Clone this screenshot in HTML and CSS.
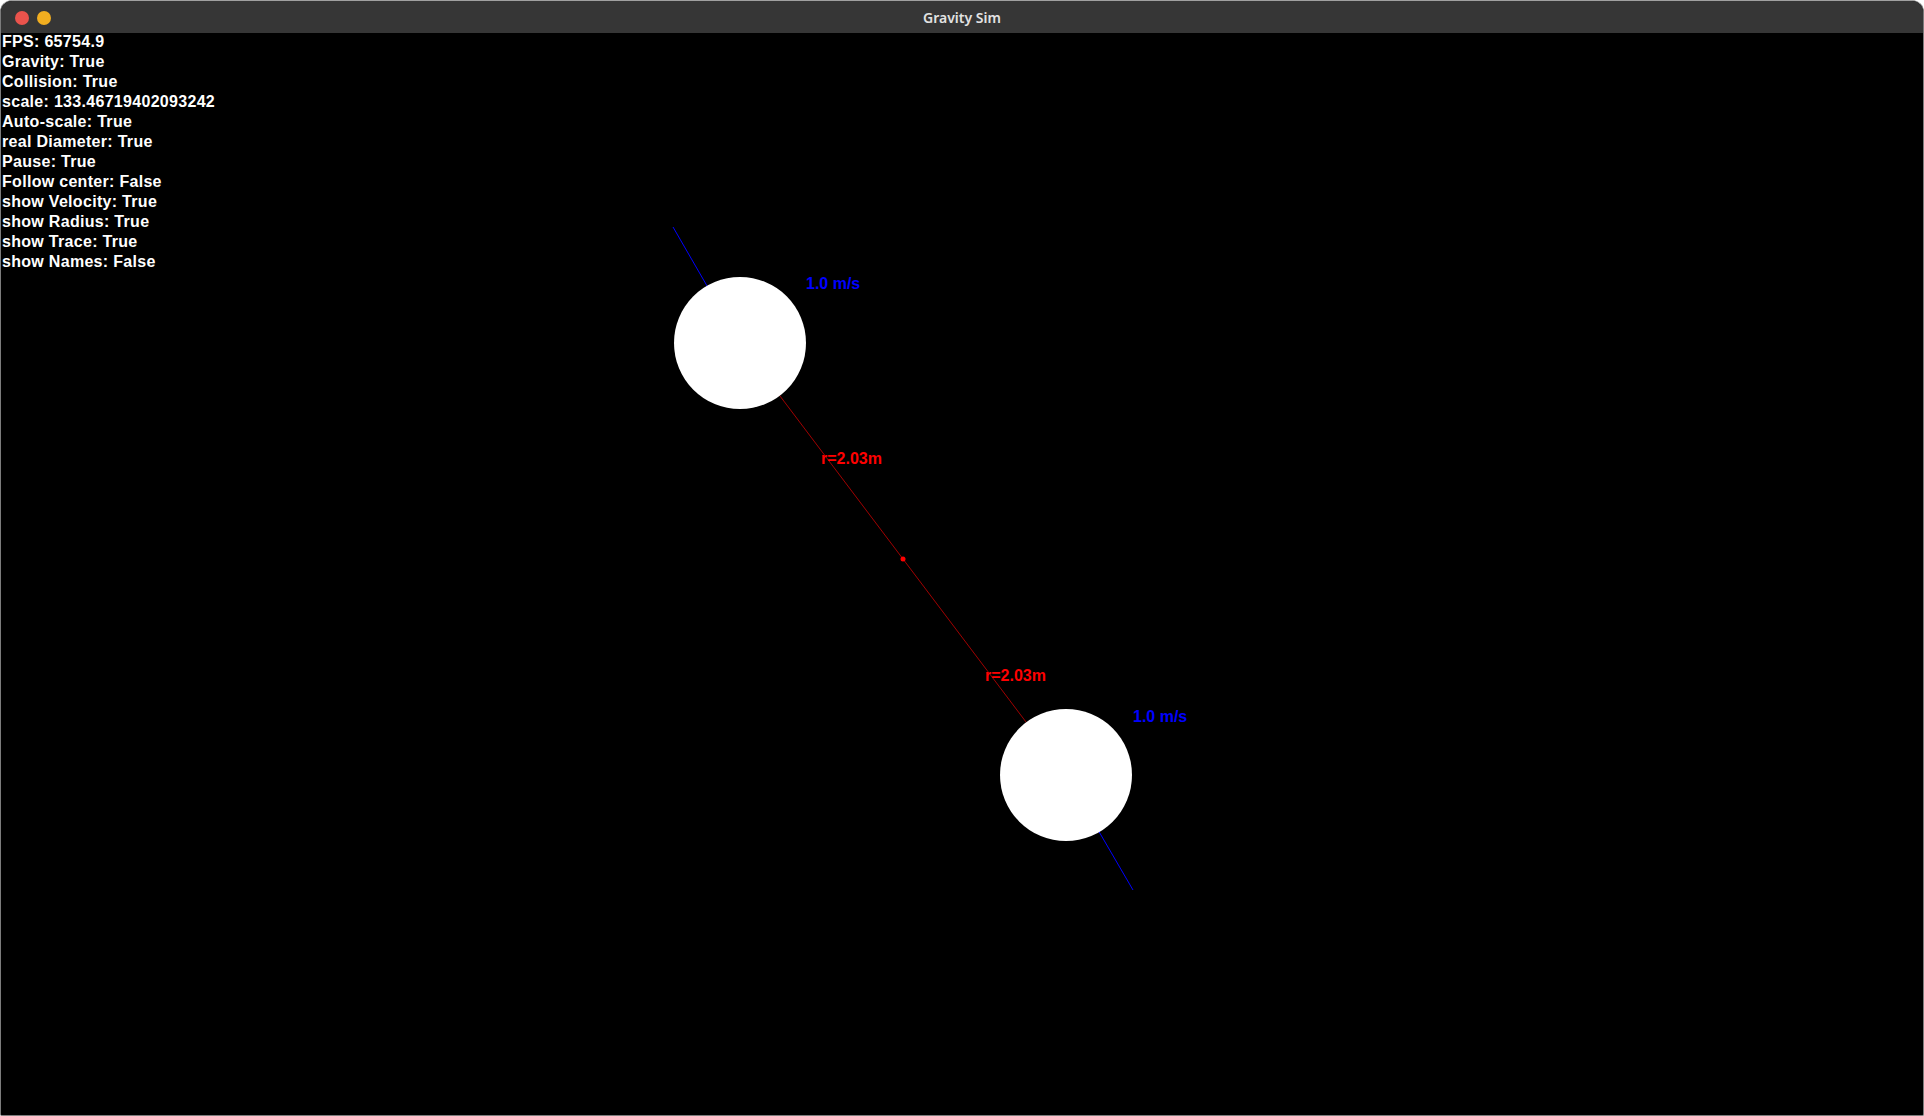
FILE: index.html
```html
<!DOCTYPE html>
<html>
<head>
<meta charset="utf-8">
<title>Gravity Sim</title>
<link rel="stylesheet" href="styles.css">
</head>
<body>
<div class="window">
  <div class="titlebar">
    <div class="lights">
      <span class="light red"></span>
      <span class="light yellow"></span>
    </div>
    <div class="title">Gravity Sim</div>
  </div>
  <div class="content">
    <svg class="scene" viewBox="1 33 1922 1081" width="1922" height="1081" xmlns="http://www.w3.org/2000/svg">
      <line class="radius-line" x1="740" y1="343" x2="1066" y2="775"/>
      <line class="vel-line" x1="740" y1="343" x2="673" y2="227"/>
      <line class="vel-line" x1="1066" y1="775" x2="1133" y2="890"/>
      <circle class="body" cx="740" cy="343" r="66"/>
      <circle class="body" cx="1066" cy="775" r="66"/>
      <circle class="center-dot" cx="903" cy="559" r="2.5"/>
      <text class="lbl lbl-radius" x="821" y="464">r=2.03m</text>
      <text class="lbl lbl-radius" x="985" y="681">r=2.03m</text>
      <text class="lbl lbl-vel" x="806" y="289">1.0 m/s</text>
      <text class="lbl lbl-vel" x="1133" y="722">1.0 m/s</text>
    </svg>
    <div class="hud">
      <div>FPS: 65754.9</div>
      <div>Gravity: True</div>
      <div>Collision: True</div>
      <div>scale: 133.46719402093242</div>
      <div>Auto-scale: True</div>
      <div>real Diameter: True</div>
      <div>Pause: True</div>
      <div>Follow center: False</div>
      <div>show Velocity: True</div>
      <div>show Radius: True</div>
      <div>show Trace: True</div>
      <div>show Names: False</div>
    </div>
  </div>
</div>
</body>
</html>
```
FILE: styles.css
```css
html, body {
  margin: 0;
  padding: 0;
  background: #ffffff;
}
.window {
  width: 1924px;
  height: 1116px;
  box-sizing: border-box;
  border: 1px solid #7c7c7c;
  border-top-color: #a0a0a0;
  border-radius: 12px 12px 2px 2px;
  overflow: hidden;
  display: flex;
  flex-direction: column;
  background: #000;
}
.titlebar {
  height: 32px;
  flex: 0 0 32px;
  background: #363636;
  position: relative;
  display: flex;
  align-items: center;
  justify-content: center;
}
.lights {
  position: absolute;
  left: 14px;
  top: 10px;
  display: flex;
  gap: 8px;
}
.light {
  width: 14px;
  height: 14px;
  border-radius: 50%;
  display: block;
}
.light.red { background: #ea534c; }
.light.yellow { background: #f1ae20; }
.title {
  font-family: "Noto Sans", "DejaVu Sans", sans-serif;
  font-weight: 600;
  font-size: 14px;
  color: #e2e2e2;
  margin-top: 1px;
}
.content {
  flex: 1;
  position: relative;
  background: #000;
}
.scene {
  position: absolute;
  left: 0;
  top: 0;
  display: block;
}
.radius-line {
  stroke: #a00000;
  stroke-width: 1;
}
.vel-line {
  stroke: #0000ff;
  stroke-width: 1;
}
.body { fill: #ffffff; }
.center-dot { fill: #ff0000; }
.lbl {
  font-family: "Liberation Sans", Arial, sans-serif;
  font-weight: bold;
  font-size: 16px;
}
.lbl-radius { fill: #ff0000; }
.lbl-vel { fill: #0000ff; }
.hud {
  position: relative;
  margin-top: -1.5px;
  padding-left: 1px;
  font-family: "Liberation Sans", Arial, sans-serif;
  font-weight: bold;
  font-size: 16px;
  line-height: 20px;
  letter-spacing: 0.3px;
  color: #ffffff;
}
```
